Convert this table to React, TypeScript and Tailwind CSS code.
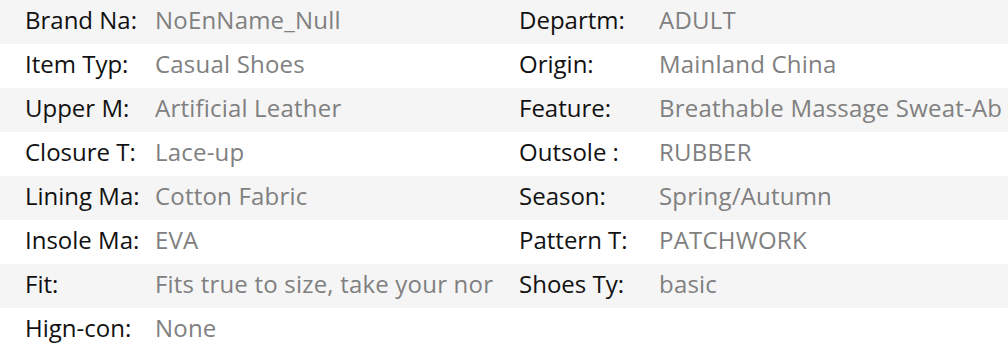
import React from 'react'

type Spec = { label: string; value: string }

const left: Spec[] = [
  { label: 'Brand Na:', value: 'NoEnName_Null' },
  { label: 'Item Typ:', value: 'Casual Shoes' },
  { label: 'Upper M:', value: 'Artificial Leather' },
  { label: 'Closure T:', value: 'Lace-up' },
  { label: 'Lining Ma:', value: 'Cotton Fabric' },
  { label: 'Insole Ma:', value: 'EVA' },
  { label: 'Fit:', value: 'Fits true to size, take your nor' },
  { label: 'Hign-con:', value: 'None' },
]

const right: Spec[] = [
  { label: 'Departm:', value: 'ADULT' },
  { label: 'Origin:', value: 'Mainland China' },
  { label: 'Feature:', value: 'Breathable Massage Sweat-Ab' },
  { label: 'Outsole :', value: 'RUBBER' },
  { label: 'Season:', value: 'Spring/Autumn' },
  { label: 'Pattern T:', value: 'PATCHWORK' },
  { label: 'Shoes Ty:', value: 'basic' },
]

function Cell({ spec, labelW }: { spec?: Spec; labelW: string }) {
  if (!spec) return <div className="h-[44px]" />
  return (
    <div className="flex items-center h-[44px] pl-[25px] pb-[4px] overflow-hidden whitespace-nowrap">
      <span className={`${labelW} shrink-0 text-[#111]`}>{spec.label}</span>
      <span className="text-[#808080] tracking-[0.2px]">{spec.value}</span>
    </div>
  )
}

export default function App() {
  return (
    <div className="w-[1008px] h-[352px] overflow-hidden bg-white text-[24px]" style={{ fontFamily: '"Open Sans", sans-serif' }}>
      {left.map((l, i) => (
        <div key={i} className={`grid grid-cols-[494px_514px] ${i % 2 === 0 ? 'bg-[#f5f5f5]' : 'bg-white'}`}>
          <Cell spec={l} labelW="w-[130px]" />
          <Cell spec={right[i]} labelW="w-[140px]" />
        </div>
      ))}
    </div>
  )
}
